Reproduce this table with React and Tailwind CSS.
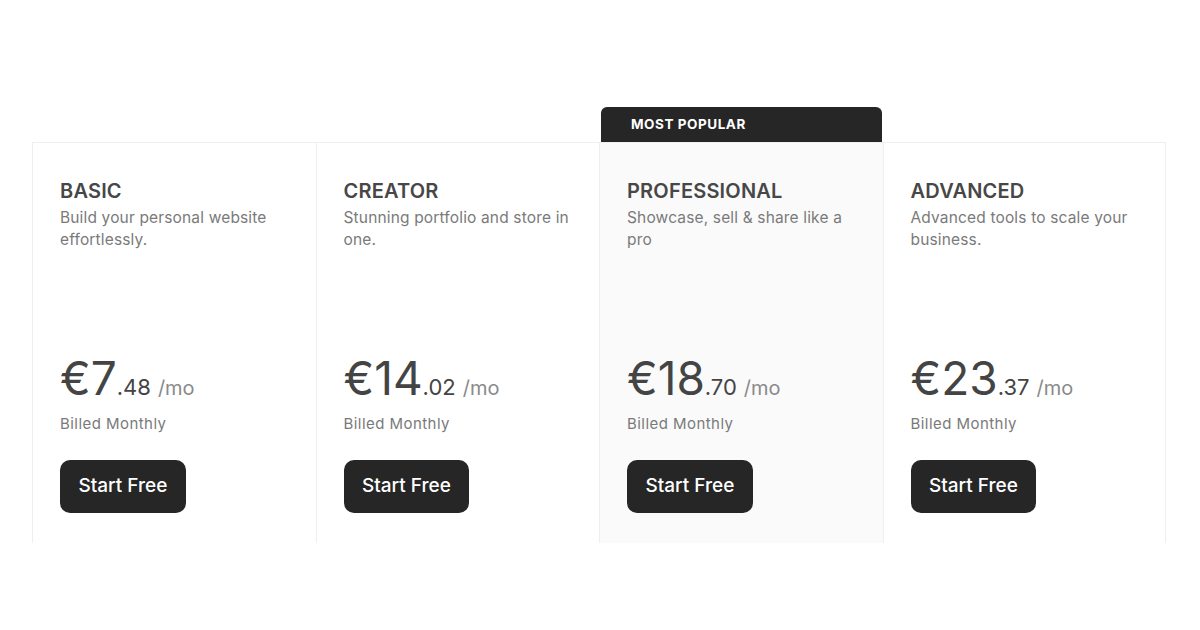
const plans = [
  { name: "BASIC", desc: "Build your personal website effortlessly.", whole: "7", cents: ".48" },
  { name: "CREATOR", desc: "Stunning portfolio and store in one.", whole: "14", cents: ".02" },
  { name: "PROFESSIONAL", desc: "Showcase, sell & share like a pro", whole: "18", cents: ".70", popular: true },
  { name: "ADVANCED", desc: "Advanced tools to scale your business.", whole: "23", cents: ".37" },
];

function PlanCard({ plan, last }) {
  return (
    <div
      className={
        "flex h-[401px] flex-col justify-between border-t border-l border-[#efefef] px-[27px] pt-9 pb-[30px] " +
        (last ? "border-r " : "") +
        (plan.popular ? "bg-[#fafafa]" : "bg-white")
      }
    >
      {/* Name + blurb */}
      <div>
        <h3 className="text-[20px] leading-6 font-semibold tracking-[0.01em] text-[#474747]">{plan.name}</h3>
        <p className="mt-1 text-[15.5px] leading-[22px] tracking-[0.01em] text-[#7a7a7a]">{plan.desc}</p>
      </div>

      {/* Price + action */}
      <div>
        <div className="flex items-baseline leading-none text-[#444]">
          <span className="text-[46px] leading-none">€{plan.whole}</span>
          <span className="text-[22px]">{plan.cents}</span>
          <span className="ml-[7px] text-[20px] text-[#8a8a8a]">/mo</span>
        </div>
        <p className="mt-[11px] text-[15px] leading-6 tracking-[0.03em] text-[#7a7a7a]">Billed Monthly</p>
        <button className="mt-[24px] h-[53px] rounded-[10px] bg-[#262626] px-[18.5px] text-[19px] font-medium text-white">
          Start Free
        </button>
      </div>
    </div>
  );
}

export default function App() {
  return (
    <div className="min-h-[630px] bg-white pt-[107px] font-['Inter','Noto_Sans',sans-serif]">
      <div className="ml-[32px] w-[1134px]">
        {/* Badge row */}
        <div className="grid grid-cols-4">
          <div className="col-start-3 pr-[1px] pl-[2px]">
            <div className="flex h-[35px] items-center rounded-t-[6px] bg-[#262626] pl-[30px] text-[13.5px] font-bold tracking-[0.04em] text-white">
              MOST POPULAR
            </div>
          </div>
        </div>

        {/* Cards */}
        <div className="grid grid-cols-4">
          {plans.map((p, i) => (
            <PlanCard key={p.name} plan={p} last={i === plans.length - 1} />
          ))}
        </div>
      </div>
    </div>
  );
}
